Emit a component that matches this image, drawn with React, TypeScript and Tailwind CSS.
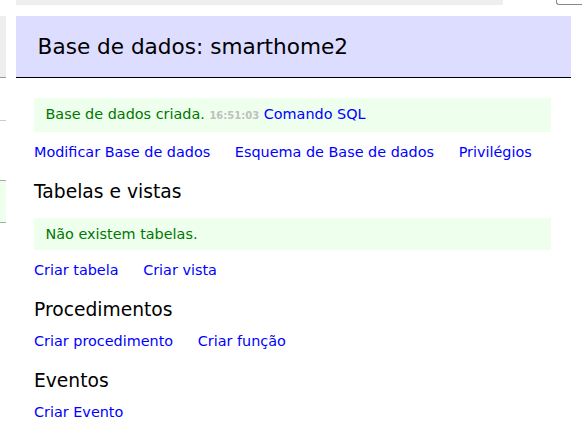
const links = (items: string[]) => (
  <p className="mt-[11px]">
    {items.map((t) => (
      <span key={t}>
        <a href="#" className="mr-5 text-[#00f]">
          {t}
        </a>{' '}
      </span>
    ))}
  </p>
);

function Message(props: { children: React.ReactNode }) {
  return (
    <div className="mt-[14.4px] mr-5 bg-[#efe] px-[11.5px] py-[7px] text-[#070]">
      {props.children}
    </div>
  );
}

export default function App() {
  return (
    <div
      className="h-[448px] w-[582px] overflow-hidden bg-white text-[14.4px] leading-[18px] text-black"
      style={{ fontFamily: '"DejaVu Sans", Verdana, sans-serif' }}
    >
      {/* breadcrumb + lang form, cut off at the top */}
      <div className="flex h-[5px]">
        <div className="w-[16px]" />
        <div className="w-[487px] bg-[#eee]" />
        <div className="ml-[53px] flex-1 rounded-bl-[3px] border-b border-l border-[#888]" />
      </div>

      <div className="mt-[11px] flex">
        {/* left menu, mostly out of view */}
        <aside className="w-[6px] shrink-0">
          <div className="h-[62px] border-b border-[#999] bg-[#eee]" />
          <div className="mt-[42px] h-px bg-[#ccc]" />
          <div className="mt-[59px] h-[43px] border-y border-[#aaa] bg-[#efe]" />
        </aside>

        <main className="ml-[10px] w-[555px]">
          <h2 className="border-b border-black bg-[#ddf] px-[21.6px] py-[17px] text-[21.6px] leading-[27px] font-normal">
            Base de dados: smarthome2
          </h2>

          <div className="pt-[6px] pl-[18px]">
            <Message>
              Base de dados criada.{' '}
              <span className="text-[10px] font-bold text-[#c0c0c0]">16:51:03</span>{' '}
              <a href="#" className="text-[#00f]">
                Comando SQL
              </a>
            </Message>
            {links(['Modificar Base de dados', 'Esquema de Base de dados', 'Privilégios'])}

            <h3 className="mt-[18.7px] text-[18.7px] leading-[23.4px] font-normal">Tabelas e vistas</h3>
            <Message>Não existem tabelas.</Message>
            {links(['Criar tabela', 'Criar vista'])}

            <h3 className="mt-[18.7px] text-[18.7px] leading-[23.4px] font-normal">Procedimentos</h3>
            {links(['Criar procedimento', 'Criar função'])}

            <h3 className="mt-[18.7px] text-[18.7px] leading-[23.4px] font-normal">Eventos</h3>
            {links(['Criar Evento'])}
          </div>
        </main>
      </div>
    </div>
  );
}
